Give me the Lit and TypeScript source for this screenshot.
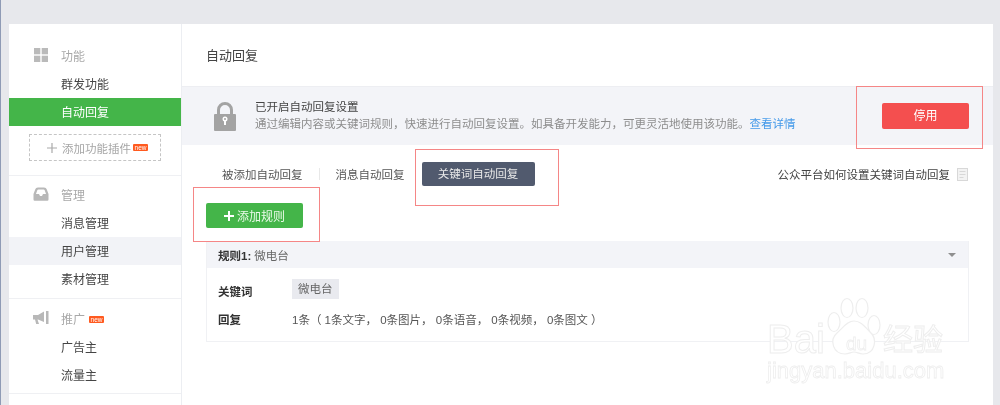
import { LitElement, html, css } from "lit";
import { customElement } from "lit/decorators.js";

@customElement("app-root")
export class AppRoot extends LitElement {
  static styles = css`
    :host { display: block; width: 1000px; height: 405px; overflow: hidden; position: relative;
      font-family: "Liberation Sans", "Noto Sans CJK SC", sans-serif; font-size: 12px; color: #444; }
    .page { box-sizing: border-box; width: 1000px; height: 405px; background: #e7e8ec; padding: 24px 7px 0 8px;
      border-left: 1px solid #8f9bb5; position: relative; filter: blur(0.5px); overflow: hidden; }
    .panel { background: #fff; display: flex; height: 381px; overflow: hidden; }
    .side { width: 172px; flex: none; border-right: 1px solid #eceef2; }
    .group { border-bottom: 1px solid #eff0f3; }
    .g1 { padding-top: 17px; }
    .g2 { padding: 4px 0 5px; }
    .g3 { padding: 5px 0 4px; }
    .head { height: 28px; display: flex; align-items: center; color: #a8a8a8; padding-left: 24px; gap: 12px; margin-bottom: 1px; }
    .head svg { width: 16px; height: 16px; flex: none; }
    .item { height: 28px; line-height: 30px; padding-left: 52px; color: #444; }
    .item.on { background: #44b549; color: #fff; }
    .item.hover { background: #f2f3f7; }
    .new { display: inline-block; background: #ff5a1f; color: #fff; font-size: 6.5px; line-height: 7px; height: 7px; width: 15px; text-align: center; margin-left: 4px; border-radius: 1px; vertical-align: 2px; }
    .plugin { margin: 8px 20px 14px 20px; height: 27px; box-sizing: border-box; border: 1px dashed #c5c5c5; color: #a6a6a6;
      display: flex; align-items: center; padding-left: 17px; gap: 5px; font-size: 11.5px; }
    .plugin svg { width: 10px; height: 10px; flex: none; }
    .plugin .new { margin-left: -3px; vertical-align: 0; }
    .main { flex: 1; min-width: 0; }
    .title { height: 62px; line-height: 63px; padding-left: 24px; font-size: 13px; color: #444; }
    .notice { height: 59px; background: #f3f4f8; border-top: 1px solid #edeef2; box-sizing: border-box; display: flex; align-items: center; padding-left: 32px; }
    .lock { width: 22px; height: 29px; flex: none; margin-right: 19px; }
    .notice-text { flex: 1; padding-bottom: 1px; }
    .notice-text .t { font-size: 11.5px; color: #444; line-height: 18px; }
    .notice-text .d { font-size: 11.5px; color: #8d8d8d; line-height: 17px; }
    .notice-text a { color: #459ae9; }
    .stop { width: 87px; height: 26px; background: #f44f4f; color: #fff; border-radius: 2px; text-align: center; line-height: 26px; font-size: 12px; margin-right: 24px; }
    .tabs { display: flex; align-items: center; height: 24px; margin-top: 17px; padding-left: 40px; }
    .tab { color: #555; font-size: 11.5px; white-space: nowrap; }
    .sep { width: 1px; height: 12px; background: #e8e8e8; margin: 0 16px; }
    .tab.active { background: #515a6e; color: #e8e8e8; border-radius: 2px; width: 113px; height: 24px; line-height: 24px; text-align: center; margin-left: 17px; }
    .help { margin-left: auto; margin-right: 25px; display: flex; align-items: center; gap: 7px; font-size: 11.5px; color: #444; }
    .help svg { width: 11px; height: 13px; }
    .add { margin: 17px 0 0 24px; width: 97px; height: 25px; background: #44b549; border-radius: 2px; color: #eafbe9; display: flex; align-items: center; justify-content: center; gap: 3px; font-size: 12px; }
    .add svg { width: 10px; height: 10px; }
    .rule { margin: 13px 24px 0 24px; border: 1px solid #f0f1f4; border-top: 0; height: 101px; box-sizing: border-box; }
    .rule-head { height: 27px; background: #f3f4f8; display: flex; align-items: center; padding: 0 12px 0 11px; font-size: 11.5px; color: #666; }
    .rule-head b { color: #333; margin-right: 3px; }
    .caret { margin-left: auto; width: 0; height: 0; border: 4px solid transparent; border-top: 4px solid #8f8f8f; border-bottom: 0; }
    .row { display: grid; grid-template-columns: 74px 1fr; padding-left: 11px; align-items: center; font-size: 11.5px; color: #555; }
    .row b { color: #333; }
    .row.k { margin-top: 11px; height: 20px; }
    .row.k b { padding-top: 3px; }
    .row.r { margin-top: 10px; height: 20px; }
    .tag { display: inline-block; background: #e9eaef; color: #666; padding: 0 6px; height: 20px; line-height: 20px; }
    .mark { position: absolute; border: 1px solid #f58686; box-sizing: border-box; }
    .wm { position: absolute; left: 764px; top: 296px; width: 215px; height: 95px; color: #fff; -webkit-text-stroke: 1px #eeeeee; }
    .wm .big { position: absolute; left: 2px; top: 23px; font-size: 40px; line-height: 40px; white-space: nowrap; }
    .wm .cn { position: absolute; left: 118px; top: 27px; font-size: 30px; line-height: 34px; white-space: nowrap; }
    .wm .url { position: absolute; left: 2px; top: 63px; font-size: 22px; line-height: 24px; white-space: nowrap; -webkit-text-stroke: 0.8px #eeeeee; }
    .wm .du { position: absolute; left: 81px; top: 37px; font-size: 19px; line-height: 22px; white-space: nowrap; -webkit-text-stroke: 0.8px #eeeeee; }
    .paw { position: absolute; left: 60px; top: 0; width: 60px; height: 62px; fill: #fff; stroke: #eeeeee; stroke-width: 1.2; }
  `;

  render() {
    return html`
      <div class="page">
        <div class="panel">
          <div class="side">
            <div class="group g1">
              <div class="head">
                <svg viewBox="0 0 16 16"><g fill="#bababa"><rect x="1" y="1" width="6.300" height="6.300"/><rect x="8.700" y="1" width="6.300" height="6.300"/><rect x="1" y="8.700" width="6.300" height="6.300"/><rect x="8.700" y="8.700" width="6.300" height="6.300"/></g></svg>
                <span>功能</span>
              </div>
              <div class="item">群发功能</div>
              <div class="item on">自动回复</div>
              <div class="plugin">
                <svg viewBox="0 0 10 10"><path d="M5 0v10M0 5h10" stroke="#aaa" stroke-width="1.200"/></svg>
                <span>添加功能插件</span><span class="new">new</span>
              </div>
            </div>
            <div class="group g2">
              <div class="head">
                <svg viewBox="0 0 16 16"><path d="M5 1.500h6c1.500 0 2.300.7 2.800 2L15.500 8v5.500a1.200 1.200 0 0 1-1.200 1.200H1.700a1.200 1.200 0 0 1-1.200-1.200V8l1.700-4.500c.5-1.300 1.300-2 2.800-2zM3 8h3l1 2h2l1-2h3l-1.200-3.500c-.2-.6-.6-1-1.300-1H5.500c-.7 0-1.100.4-1.300 1z" fill="#b8b8b8" fill-rule="evenodd"/></svg>
                <span>管理</span>
              </div>
              <div class="item">消息管理</div>
              <div class="item hover">用户管理</div>
              <div class="item">素材管理</div>
            </div>
            <div class="group g3">
              <div class="head">
                <svg viewBox="0 0 16 16"><path d="M0 5h5l6-3.500V12L5 9.500H4.500L6 14H3.200L2 9.500H0zM13 1h2.500v13H13z" fill="#b8b8b8"/></svg>
                <span>推广<span class="new">new</span></span>
              </div>
              <div class="item">广告主</div>
              <div class="item">流量主</div>
            </div>
          </div>
          <div class="main">
            <div class="title">自动回复</div>
            <div class="notice">
              <svg class="lock" viewBox="0 0 22 29"><path d="M4.500 13V8a6.500 6.500 0 0 1 13 0v5" fill="none" stroke="#a3a3a3" stroke-width="3"/><path d="M1 12h20a1 1 0 0 1 1 1v15a1 1 0 0 1-1 1H1a1 1 0 0 1-1-1V13a1 1 0 0 1 1-1z" fill="#a3a3a3"/><circle cx="11" cy="17" r="2.500" fill="#fff"/><rect x="10" y="17" width="2" height="6" fill="#fff"/><circle cx="11" cy="17" r="1" fill="#a3a3a3"/></svg>
              <div class="notice-text">
                <div class="t">已开启自动回复设置</div>
                <div class="d">通过编辑内容或关键词规则，快速进行自动回复设置。如具备开发能力，可更灵活地使用该功能。<a>查看详情</a></div>
              </div>
              <div class="stop">停用</div>
            </div>
            <div class="tabs">
              <span class="tab">被添加自动回复</span><span class="sep"></span>
              <span class="tab">消息自动回复</span>
              <span class="tab active">关键词自动回复</span>
              <span class="help">公众平台如何设置关键词自动回复
                <svg viewBox="0 0 11 13"><rect x=".5" y=".5" width="10" height="12" fill="#f3f3f3" stroke="#d8d8d8"/><path d="M2.500 3.500h6M2.500 6.500h6M2.500 9.500h4" stroke="#d8d8d8"/></svg>
              </span>
            </div>
            <div class="add">
              <svg viewBox="0 0 10 10"><path d="M5 0v10M0 5h10" stroke="#fff" stroke-width="2"/></svg>添加规则
            </div>
            <div class="rule">
              <div class="rule-head"><b>规则1:</b>微电台<span class="caret"></span></div>
              <div class="row k"><b>关键词</b><div><span class="tag">微电台</span></div></div>
              <div class="row r"><b>回复</b><div>1条（ 1条文字， 0条图片， 0条语音， 0条视频， 0条图文 ）</div></div>
            </div>
          </div>
        </div>
        <div class="mark" style="left:855px;top:86px;width:127px;height:63px"></div>
        <div class="mark" style="left:414px;top:149px;width:144px;height:57px"></div>
        <div class="mark" style="left:192px;top:187px;width:127px;height:55px"></div>
        <div class="wm">
          <span class="big">Bai</span><span class="cn">经验</span>
          <span class="url">jingyan.baidu.com</span>
          <svg class="paw" viewBox="0 0 60 62">
            <ellipse cx="9" cy="26" rx="6" ry="9.500"/><ellipse cx="22" cy="12" rx="6" ry="9.500"/><ellipse cx="37" cy="12" rx="6" ry="9.500"/><ellipse cx="49" cy="29" rx="6" ry="9.500"/>
            <path d="M29 25c7 0 11 6 16 11 8 7 5 22-7 22-4 0-6-2-9-2s-5 2-9 2c-12 0-16-14-8-21 6-5 10-12 17-12z"/>
          </svg>
          <span class="du">du</span>
        </div>
      </div>
    `;
  }
}
